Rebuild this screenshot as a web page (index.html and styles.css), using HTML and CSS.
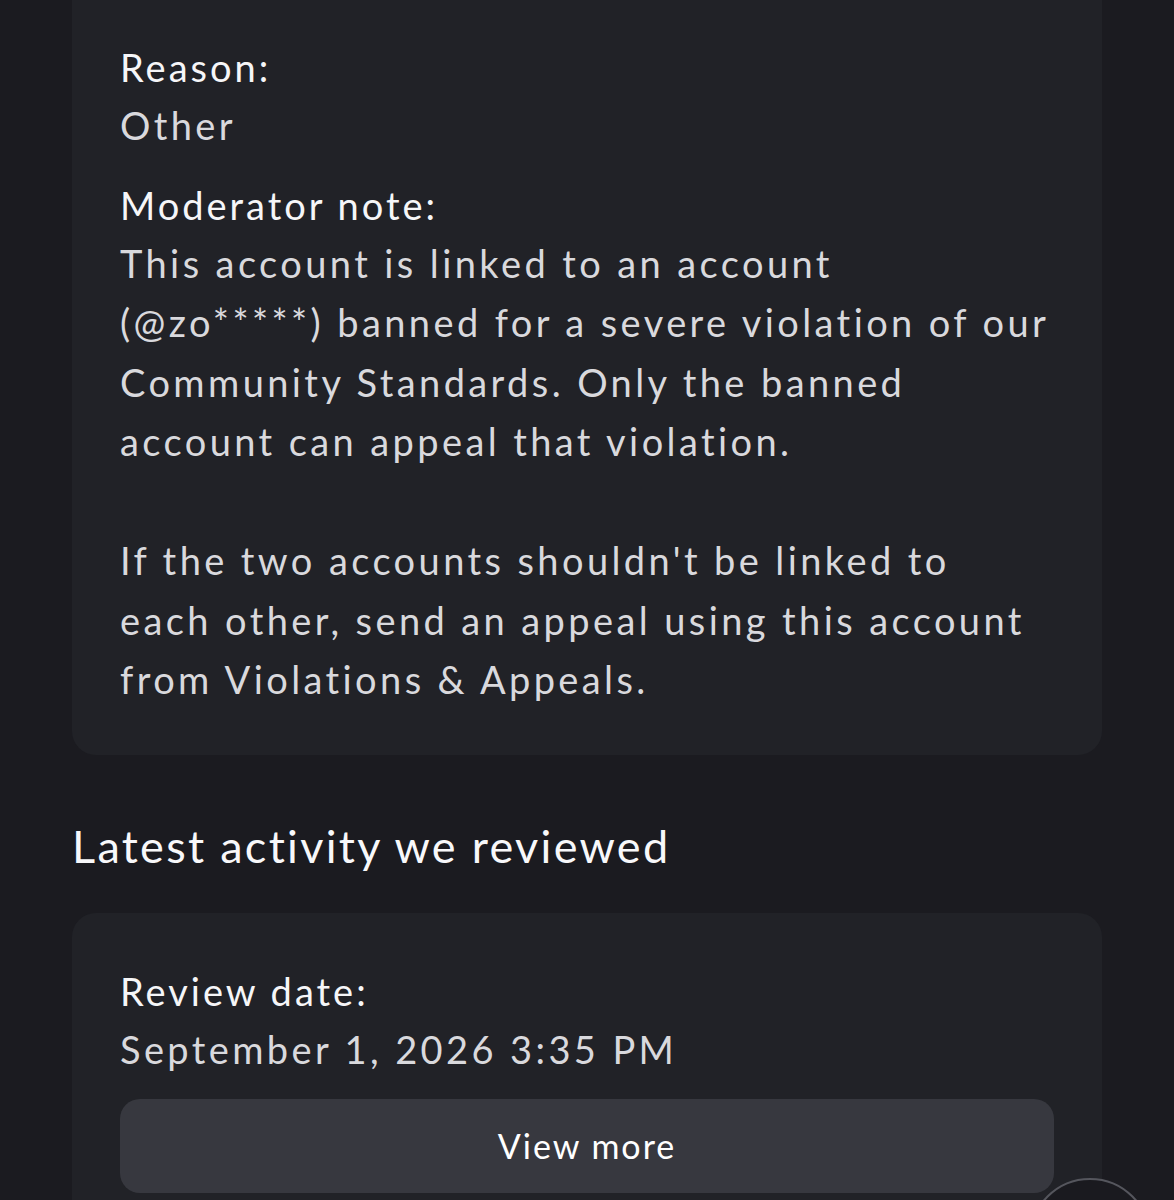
FILE: index.html
```html
<!DOCTYPE html>
<html lang="en">
<head>
    <meta charset="UTF-8">
    <title>Account status</title>
    <link rel="stylesheet" href="styles.css">
</head>
<body>
<div class="page">
    <div class="card first">
        <div class="field">
            <div class="label">Reason:</div>
            <div class="value">Other</div>
        </div>
        <div class="field">
            <div class="label">Moderator note:</div>
            <div class="value">This account is linked to an account<br>(@zo*****) banned for a severe violation of our<br>Community Standards. Only the banned<br>account can appeal that violation.<br><br>If the two accounts shouldn't be linked to<br>each other, send an appeal using this account<br>from Violations &amp; Appeals.</div>
        </div>
    </div>

    <h2 class="title">Latest activity we reviewed</h2>

    <div class="card">
        <div class="field">
            <div class="label">Review date:</div>
            <div class="value">September 1, 2026 3:35 PM</div>
        </div>
        <div class="btn">View more</div>
    </div>
</div>
<div class="fab"></div>
</body>
</html>
```

FILE: styles.css
```css
*{
    margin: 0px;
    padding: 0px;
    box-sizing: border-box;
}
body{
    background-color: #1b1b20;
    font-family: "Lato", "Noto Sans", sans-serif;
    color: #f4f4f6;
    overflow: hidden;
}
.page{
    padding: 0px 72px;
}
.card{
    background-color: #212227;
    border-radius: 24px;
    padding: 49px 48px 45px;
}
.card.first{
    margin-top: -40px;
    padding-top: 78px;
}
.field{
    margin-bottom: 20px;
}
.field:last-child{
    margin-bottom: 0px;
}
.label{
    font-size: 38px;
    line-height: 58px;
    letter-spacing: 3px;
    color: #f6f6f8;
}
.value{
    font-size: 38px;
    line-height: 59.5px;
    letter-spacing: 3.4px;
    color: #d9d9dd;
    white-space: nowrap;
}
.title{
    font-weight: normal;
    font-size: 45px;
    letter-spacing: 2.3px;
    line-height: 60px;
    color: #f8f8fa;
    margin: 61px 0px 37px;
}
.btn{
    margin-top: 5px;
    height: 94px;
    border-radius: 20px;
    background-color: #37383f;
    color: #ffffff;
    font-size: 34px;
    letter-spacing: 2px;
    line-height: 94px;
    text-align: center;
}
.fab{
    position: absolute;
    left: 1029px;
    top: 1178px;
    width: 122px;
    height: 122px;
    border-radius: 50%;
    border: 2px solid #55565d;
    background-color: #1a1a1f;
}
```
